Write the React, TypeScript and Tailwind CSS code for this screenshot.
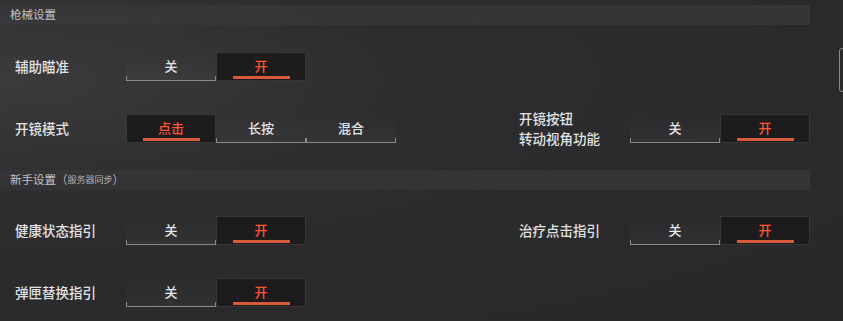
import React from "react"

type Seg = { label: string; active?: boolean }

function Segment({ label, active }: Seg) {
  if (active) {
    return (
      <div className="relative flex h-[29px] w-[90px] items-center justify-center border border-[#3a3636] bg-[#1d1b1b] text-[13px] font-medium text-[#ff5438]">
        {label}
        <span className="absolute bottom-[1px] left-[16px] h-[3px] w-[57px] bg-[#d85a3c]" />
      </div>
    )
  }
  return (
    <div className="relative flex h-[29px] w-[90px] items-center justify-center bg-[linear-gradient(180deg,rgba(255,255,255,0)_0%,rgba(255,255,255,0.03)_100%)] text-[13px] font-medium text-[#e6e6e6]">
      {label}
      <span className="absolute bottom-0 left-0 right-0 h-[5px] border-x border-b border-[#8a8a8a]" />
    </div>
  )
}

function Toggle({ options }: { options: Seg[] }) {
  return (
    <div className="flex">
      {options.map((o) => (
        <Segment key={o.label} {...o} />
      ))}
    </div>
  )
}

function Item({
  label,
  options,
  wide,
}: {
  label: React.ReactNode
  options: Seg[]
  wide?: boolean
}) {
  return (
    <div className={`flex items-center ${wide ? "w-[504px]" : ""}`}>
      <div className="w-[111px] text-[13.5px] font-medium leading-[20px] text-[#e2e2e2]">{label}</div>
      <Toggle options={options} />
    </div>
  )
}

const onOff: Seg[] = [{ label: "关" }, { label: "开", active: true }]

function Header({ children }: { children: React.ReactNode }) {
  return (
    <div className="flex h-[20px] w-[810px] items-center bg-[linear-gradient(90deg,rgba(255,255,255,0.02),rgba(255,255,255,0.045)_60%,rgba(255,255,255,0.05))] pl-[10px] text-[11.5px] text-[#c4c4c4]">
      {children}
    </div>
  )
}

export default function App() {
  return (
    <div
      className="relative h-[321px] w-[843px] overflow-hidden bg-[radial-gradient(ellipse_at_0%_25%,#3b3b3d_0%,#2d2d2f_35%,#28282a_100%)] pt-[5px]"
      style={{ fontFamily: '"Noto Sans CJK SC", "Noto Sans", sans-serif' }}
    >
      <Header>枪械设置</Header>

      <div className="mt-[10px] flex h-[62px] items-center pl-[15px]">
        <Item label="辅助瞄准" options={onOff} />
      </div>

      <div className="flex h-[62px] items-center pl-[15px]">
        <Item
          wide
          label="开镜模式"
          options={[{ label: "点击", active: true }, { label: "长按" }, { label: "混合" }]}
        />
        <Item
          label={
            <div className="flex flex-col">
              <span>开镜按钮</span>
              <span>转动视角功能</span>
            </div>
          }
          options={onOff}
        />
      </div>

      <div className="mt-[11px]">
        <Header>
          新手设置
          <span className="text-[#b0b0b0]">（</span>
          <span className="text-[9px] text-[#b0b0b0]">服务器同步</span>
          <span className="text-[#b0b0b0]">）</span>
        </Header>
      </div>

      <div className="mt-[9px] flex h-[62px] items-center pl-[15px]">
        <Item wide label="健康状态指引" options={onOff} />
        <Item label="治疗点击指引" options={onOff} />
      </div>

      <div className="flex h-[62px] items-center pl-[15px]">
        <Item label="弹匣替换指引" options={onOff} />
      </div>

      <span className="absolute right-[-4px] top-[48px] h-[44px] w-[8px] rounded-[3px] border border-[#8a8a8a]" />
    </div>
  )
}
